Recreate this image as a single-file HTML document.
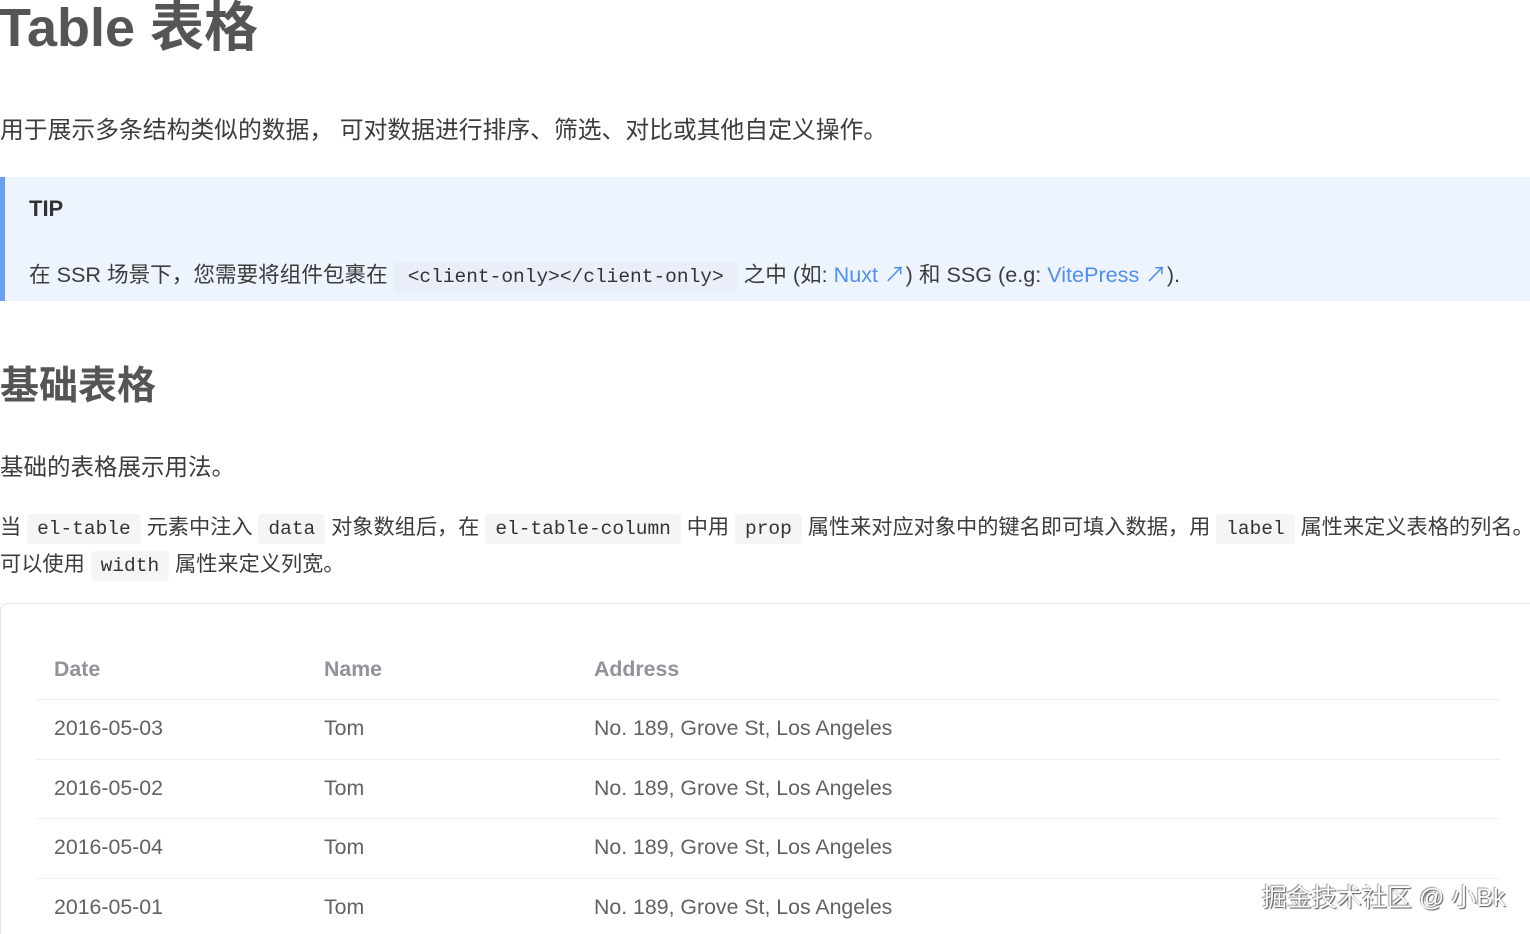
<!DOCTYPE html>
<html style="overflow:hidden;height:934px"><head><meta charset="utf-8"><style>
body{margin:0;width:1530px;height:934px;overflow:hidden;background:#fff;font-family:"Liberation Sans","Noto Sans CJK SC",sans-serif;color:#3c3c43;position:relative}
.a{position:absolute;white-space:nowrap}
h1{position:absolute;left:-2px;top:-17px;margin:0;font-size:54px;font-weight:bold;color:#555}
h2{position:absolute;left:0;top:355px;margin:0;font-size:39px;font-weight:bold;color:#555}
code{font-family:"Liberation Mono",monospace;background:#f4f5f7;padding:4px 10px;border-radius:4px;color:#333;font-size:19.5px}
.tip{position:absolute;left:0;top:177px;width:1530px;height:124px;background:#eef4fe;border-left:5px solid #6b9df5;box-sizing:border-box}
a{color:#4f8ff0;text-decoration:none}
.tbl{position:absolute;left:0;top:603px;width:1560px;height:340px;border-top:1px solid #e3e3e3;border-left:1px solid #e3e3e3;border-radius:8px 0 0 0}
.row{position:absolute;left:36px;width:1464px;border-top:1px solid #ebeef5;height:59px}
.c{position:absolute;font-size:21.3px;color:#606266;top:16px}
</style></head><body>
<h1>Table 表格</h1>
<div class="a" style="left:0;top:110px;font-size:23.8px;color:#3c3c3c">用于展示多条结构类似的数据， 可对数据进行排序、筛选、对比或其他自定义操作。</div>
<div class="tip"></div>
<div class="a" style="left:29px;top:196px;font-size:22px;font-weight:bold;color:#333">TIP</div>
<div class="a" style="left:29px;top:258px;font-size:21.6px;color:#3c3c3c">在 SSR 场景下，您需要将组件包裹在 <code style="background:#e9eef8;padding:4px 14px">&lt;client-only&gt;&lt;/client-only&gt;</code> 之中 (如: <a>Nuxt ↗</a>) 和 SSG (e.g: <a>VitePress ↗</a>).</div>
<h2>基础表格</h2>
<div class="a" style="left:0;top:448px;font-size:23.5px;color:#3c3c3c">基础的表格展示用法。</div>
<div class="a" style="left:0;top:510px;font-size:21.2px;color:#3c3c3c;line-height:35px">当 <code>el-table</code> 元素中注入 <code>data</code> 对象数组后，在 <code>el-table-column</code> 中用 <code>prop</code> 属性来对应对象中的键名即可填入数据，用 <code>label</code> 属性来定义表格的列名。<br>可以使用 <code>width</code> 属性来定义列宽。</div>
<div class="tbl"></div>
<div class="a" style="left:54px;top:657px;font-size:21.3px;font-weight:bold;color:#909399">Date</div>
<div class="a" style="left:324px;top:657px;font-size:21.3px;font-weight:bold;color:#909399">Name</div>
<div class="a" style="left:594px;top:657px;font-size:21.3px;font-weight:bold;color:#909399">Address</div>
<div class="row" style="top:699px"><div class="c" style="left:18px">2016-05-03</div><div class="c" style="left:288px">Tom</div><div class="c" style="left:558px">No. 189, Grove St, Los Angeles</div></div>
<div class="row" style="top:759px"><div class="c" style="left:18px">2016-05-02</div><div class="c" style="left:288px">Tom</div><div class="c" style="left:558px">No. 189, Grove St, Los Angeles</div></div>
<div class="row" style="top:818px"><div class="c" style="left:18px">2016-05-04</div><div class="c" style="left:288px">Tom</div><div class="c" style="left:558px">No. 189, Grove St, Los Angeles</div></div>
<div class="row" style="top:878px"><div class="c" style="left:18px">2016-05-01</div><div class="c" style="left:288px">Tom</div><div class="c" style="left:558px">No. 189, Grove St, Los Angeles</div></div>
<div class="a" style="left:1262px;top:878px;font-size:25px;color:#fff;text-shadow:1px 1px 1px #555,-1px -1px 1px #999">掘金技术社区 @ 小Bk</div>
</body></html>
